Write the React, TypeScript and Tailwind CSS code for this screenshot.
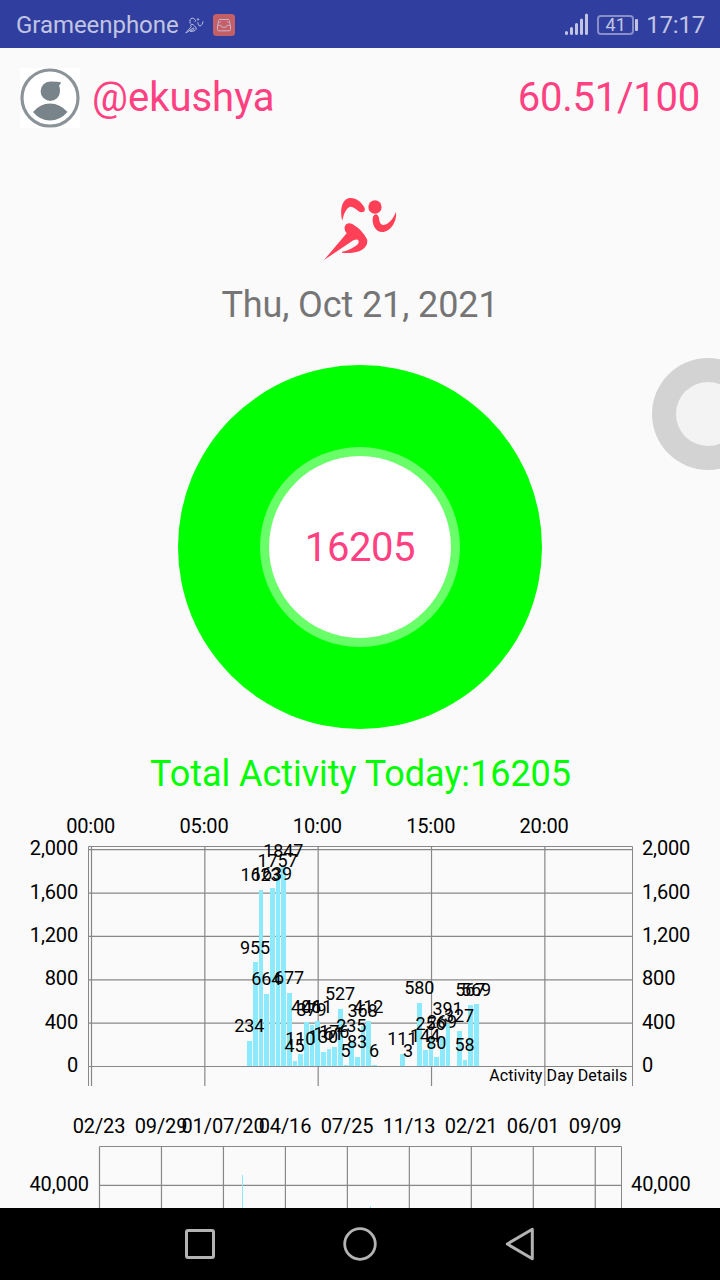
import { Fragment } from 'react';

const gridColor = '#888888';
const barColor = '#8CEAFF';

// [quarter-hour slot since midnight, steps]
const dayBars: [number, number][] = [
  [28, 234], [29, 955], [30, 1623], [31, 664], [32, 1639], [33, 1757], [34, 1847],
  [35, 677], [36, 45], [37, 110], [38, 406], [39, 379], [40, 411], [41, 130],
  [42, 161], [43, 176], [44, 527], [45, 5], [46, 235], [47, 83], [48, 368],
  [49, 412], [50, 6], [55, 111], [56, 3], [58, 580], [59, 144], [60, 256],
  [61, 80], [62, 269], [63, 391], [65, 327], [66, 58], [67, 567], [68, 569],
];

const hours = ['00:00', '05:00', '10:00', '15:00', '20:00'];
const levels = [2000, 1600, 1200, 800, 400, 0];

const historyDates = [
  '02/23', '09/29', '01/07/20', '04/16', '07/25', '11/13', '02/21', '06/01', '09/09',
];

function Runner({ className, viewBox }: { className: string; viewBox: string }) {
  return (
    <svg className={className} viewBox={viewBox} fill="currentColor">
      <circle cx="225" cy="81" r="20" />
      <path d="M127 122C118 85 128 54 152 54C170 54 186 68 194 84Q197 97 184 97Q178 97 172 91C164 84 152 76 145 83C136 90 130 105 127 122Z" />
      <path d="M219 110Q222 103 229 103Q236 106 237 114C238 124 240 134 250 135C268 132 282 112 288 95C292 125 270 156 247 156C226 156 214 130 219 110Z" />
      <path d="M72 240L140 160Q132 150 134 140Q138 129 150 130C172 137 192 160 201 178Q204 188 198 198C188 214 160 222 126 218L126 215C146 212 166 200 174 192Q178 185 174 179Q168 177 160 181Z" />
    </svg>
  );
}

function StatusBar() {
  return (
    <div className="flex h-12 shrink-0 items-center bg-[#303f9f] pr-[15px] pl-4 text-[24px] text-[#c1c5e2]">
      <span className="w-[169px] whitespace-nowrap pt-0.5 tracking-[-0.05px]">Grameenphone</span>
      <svg
        className="mt-0.5 h-[17px] w-[19px]"
        viewBox="62 42 238 208"
        fill="none"
        stroke="currentColor"
        strokeWidth="12"
        strokeLinejoin="round"
      >
        <path d="M127 122C118 85 128 54 152 54C170 54 186 68 194 84Q197 97 184 97" />
        <circle cx="225" cy="70" r="9" />
        <path d="M222 106C226 134 234 152 250 152C268 150 284 122 288 95" />
        <path d="M72 240L140 160Q132 150 134 140Q138 129 150 130C172 137 192 160 201 178Q204 188 198 198C188 214 160 222 126 218C146 212 166 200 174 192Q178 185 174 179Q168 177 160 181Z" />
      </svg>
      <svg className="mt-0.5 ml-[9px] size-[22px]" viewBox="0 0 22 22" fill="none">
        <rect width="22" height="22" rx="3.5" fill="#c45f66" />
        <path
          d="M6.7 5.5h8.6q.7 0 .9.8l1.3 5.2v4q0 1.3-1.3 1.3H5.8q-1.3 0-1.3-1.3v-4l1.3-5.2q.2-.8.9-.8zM4.8 11.3h3q.5 2.2 3.2 2.2t3.2-2.2h3M6.5 9L7.7 7.5M15.5 9L14.3 7.5"
          stroke="#c9b4d3"
          strokeWidth="1"
        />
      </svg>
      <div className="flex-1" />
      <svg className="h-6 w-6" viewBox="0 0 24 24" stroke="currentColor" strokeWidth="3" strokeLinecap="round">
        <path d="M2.5 20.5v1M7.5 16.5v5M12.5 12.5v9M17.5 8v13.5M22.5 3v18.5" />
      </svg>
      <div className="mt-0.5 ml-[9px] flex h-5 w-[37px] items-center justify-center rounded-[4px] border-2 border-[#888fc8] text-[18px] leading-none">
        41
      </div>
      <div className="mt-0.5 ml-px h-3 w-[3px] rounded-[1px] bg-[#c1c5e2]" />
      <span className="ml-2 pt-0.5 tracking-[-0.2px]">17:17</span>
    </div>
  );
}

function Header() {
  return (
    <div className="flex h-[100px] items-center px-5 text-[40px] text-[#ff4081]">
      <svg className="size-[60px]" viewBox="0 0 60 60">
        <rect width="60" height="60" fill="#fff" />
        <circle cx="30" cy="30" r="28" fill="none" stroke="#8a9398" strokeWidth="3.2" />
        <path
          d="M41 14.5Q38 13.5 30.5 13.5A9.7 9.7 0 1 0 40 23Q40 19.5 39 17.5Q40.5 16.5 41 14.5Z"
          fill="#79838a"
        />
        <path d="M13 44Q20 35.5 30 35.5T47.5 44Q40 52.5 30 52.5T13 44Z" fill="#79838a" />
      </svg>
      <span className="ml-3">@ekushya</span>
      <span className="ml-auto tracking-[-0.25px]">60.51/100</span>
    </div>
  );
}

function Donut() {
  return (
    <div className="mx-auto flex size-[364px] items-center justify-center rounded-full bg-[#00ff00]">
      <div className="flex size-[200px] items-center justify-center rounded-full bg-[#69ff69]">
        <div className="flex size-[182px] items-center justify-center rounded-full bg-white pt-0.5 text-[40px] tracking-[-0.4px] text-[#ff4081]">
          16205
        </div>
      </div>
    </div>
  );
}

function DayChart() {
  const slotX = (slot: number) => 90.9 + slot * 5.667;
  const stepY = (steps: number) => 1066.5 - steps * 0.1084;

  return (
    <svg className="block h-[290px] w-[720px]" viewBox="0 810 720 290" fontSize="20">
      <g stroke={gridColor} strokeWidth="1.2">
        {levels.map((level) => (
          <line key={level} x1="88" x2="633" y1={stepY(level)} y2={stepY(level)} />
        ))}
        {hours.map((hour, i) => (
          <line key={hour} x1={slotX(i * 20) + 0.6} x2={slotX(i * 20) + 0.6} y1="847" y2="1086" />
        ))}
        <path d="M88.5 1086V846.5H632.5V1086" fill="none" strokeWidth="1" />
      </g>
      <g fill={barColor} shapeRendering="crispEdges">
        {dayBars.map(([slot, steps]) => (
          <rect
            key={slot}
            x={slotX(slot) - 2.4}
            y={stepY(steps) - 0.5}
            width="4.8"
            height={steps * 0.1084}
          />
        ))}
      </g>
      <g fontSize="18" textAnchor="middle" letterSpacing="-0.1">
        {dayBars.map(([slot, steps]) => (
          <text key={slot} x={slotX(slot) - 0.3} y={stepY(steps) - 9.2}>
            {steps}
          </text>
        ))}
      </g>
      <g letterSpacing="-0.15">
        {hours.map((hour, i) => (
          <text key={hour} x={slotX(i * 20) - 0.2} y="833" textAnchor="middle">
            {hour}
          </text>
        ))}
        {levels.map((level) => (
          <Fragment key={level}>
            <text x="78" y={stepY(level) + 5.6} textAnchor="end">
              {level.toLocaleString('en-US')}
            </text>
            <text x="642" y={stepY(level) + 5.6}>
              {level.toLocaleString('en-US')}
            </text>
          </Fragment>
        ))}
      </g>
      <text x="627.5" y="1081" fontSize="16" letterSpacing="0.12" textAnchor="end">
        Activity Day Details
      </text>
    </svg>
  );
}

function HistoryChart() {
  return (
    <svg className="block h-[108px] w-[720px]" viewBox="0 1100 720 108" fontSize="20">
      <g stroke={gridColor} strokeWidth="1.2">
        {historyDates.map((date, i) => (
          <line key={date} x1={99.5 + i * 61.97} x2={99.5 + i * 61.97} y1="1147" y2="1208" />
        ))}
        <line x1="99" x2="621" y1="1185.3" y2="1185.3" />
        <path d="M99.5 1208V1146.5H621.5V1208" fill="none" strokeWidth="1" />
      </g>
      <path d="M242.5 1175V1208M370.5 1206V1208" stroke={barColor} />
      <g letterSpacing="-0.1">
        {historyDates.map((date, i) => (
          <text key={date} x={99 + i * 62.02} y="1133" textAnchor="middle">
            {date}
          </text>
        ))}
        <text x="89" y="1191" textAnchor="end">
          40,000
        </text>
        <text x="631" y="1191">
          40,000
        </text>
      </g>
    </svg>
  );
}

function NavBar() {
  return (
    <div className="flex h-[72px] shrink-0 items-center justify-center gap-[120px] bg-black text-[#b3b3b3]">
      <svg className="size-10" viewBox="0 0 40 40" fill="none" stroke="currentColor" strokeWidth="3">
        <rect x="6.5" y="6.5" width="27" height="27" rx="1.5" />
      </svg>
      <svg className="size-10" viewBox="0 0 40 40" fill="none" stroke="currentColor" strokeWidth="2.8">
        <circle cx="20" cy="20" r="15.3" />
      </svg>
      <svg
        className="size-10"
        viewBox="0 0 40 40"
        fill="none"
        stroke="currentColor"
        strokeWidth="3"
        strokeLinejoin="round"
      >
        <path d="M7.3 20L32.3 5.3V34.7Z" />
      </svg>
    </div>
  );
}

export default function App() {
  return (
    <div className="relative flex h-[1280px] w-[720px] flex-col overflow-hidden bg-[#fafafa] font-['Roboto',sans-serif] text-black">
      <StatusBar />
      <div className="min-h-0 flex-1 overflow-hidden">
        <Header />
        <Runner className="mx-auto mt-8 h-[100px] w-[120px] text-[#ff4057]" viewBox="0 0 360 300" />
        <div className="flex h-[49px] items-center justify-center text-[36px] tracking-[-0.1px] text-[#757575]">
          Thu, Oct 21, 2021
        </div>
        <div className="mt-[36px]">
          <Donut />
        </div>
        <div className="flex h-[81px] items-center justify-center pt-2 pl-px text-[36px] tracking-[-0.05px] text-[#00ff00]">
          Total Activity Today:16205
        </div>
        <DayChart />
        <HistoryChart />
      </div>
      <NavBar />
      <div className="absolute top-[358px] left-[652px] flex size-28 items-center justify-center rounded-full bg-[#d3d3d3]">
        <div className="size-16 rounded-full bg-[#f3f3f3]" />
      </div>
    </div>
  );
}
